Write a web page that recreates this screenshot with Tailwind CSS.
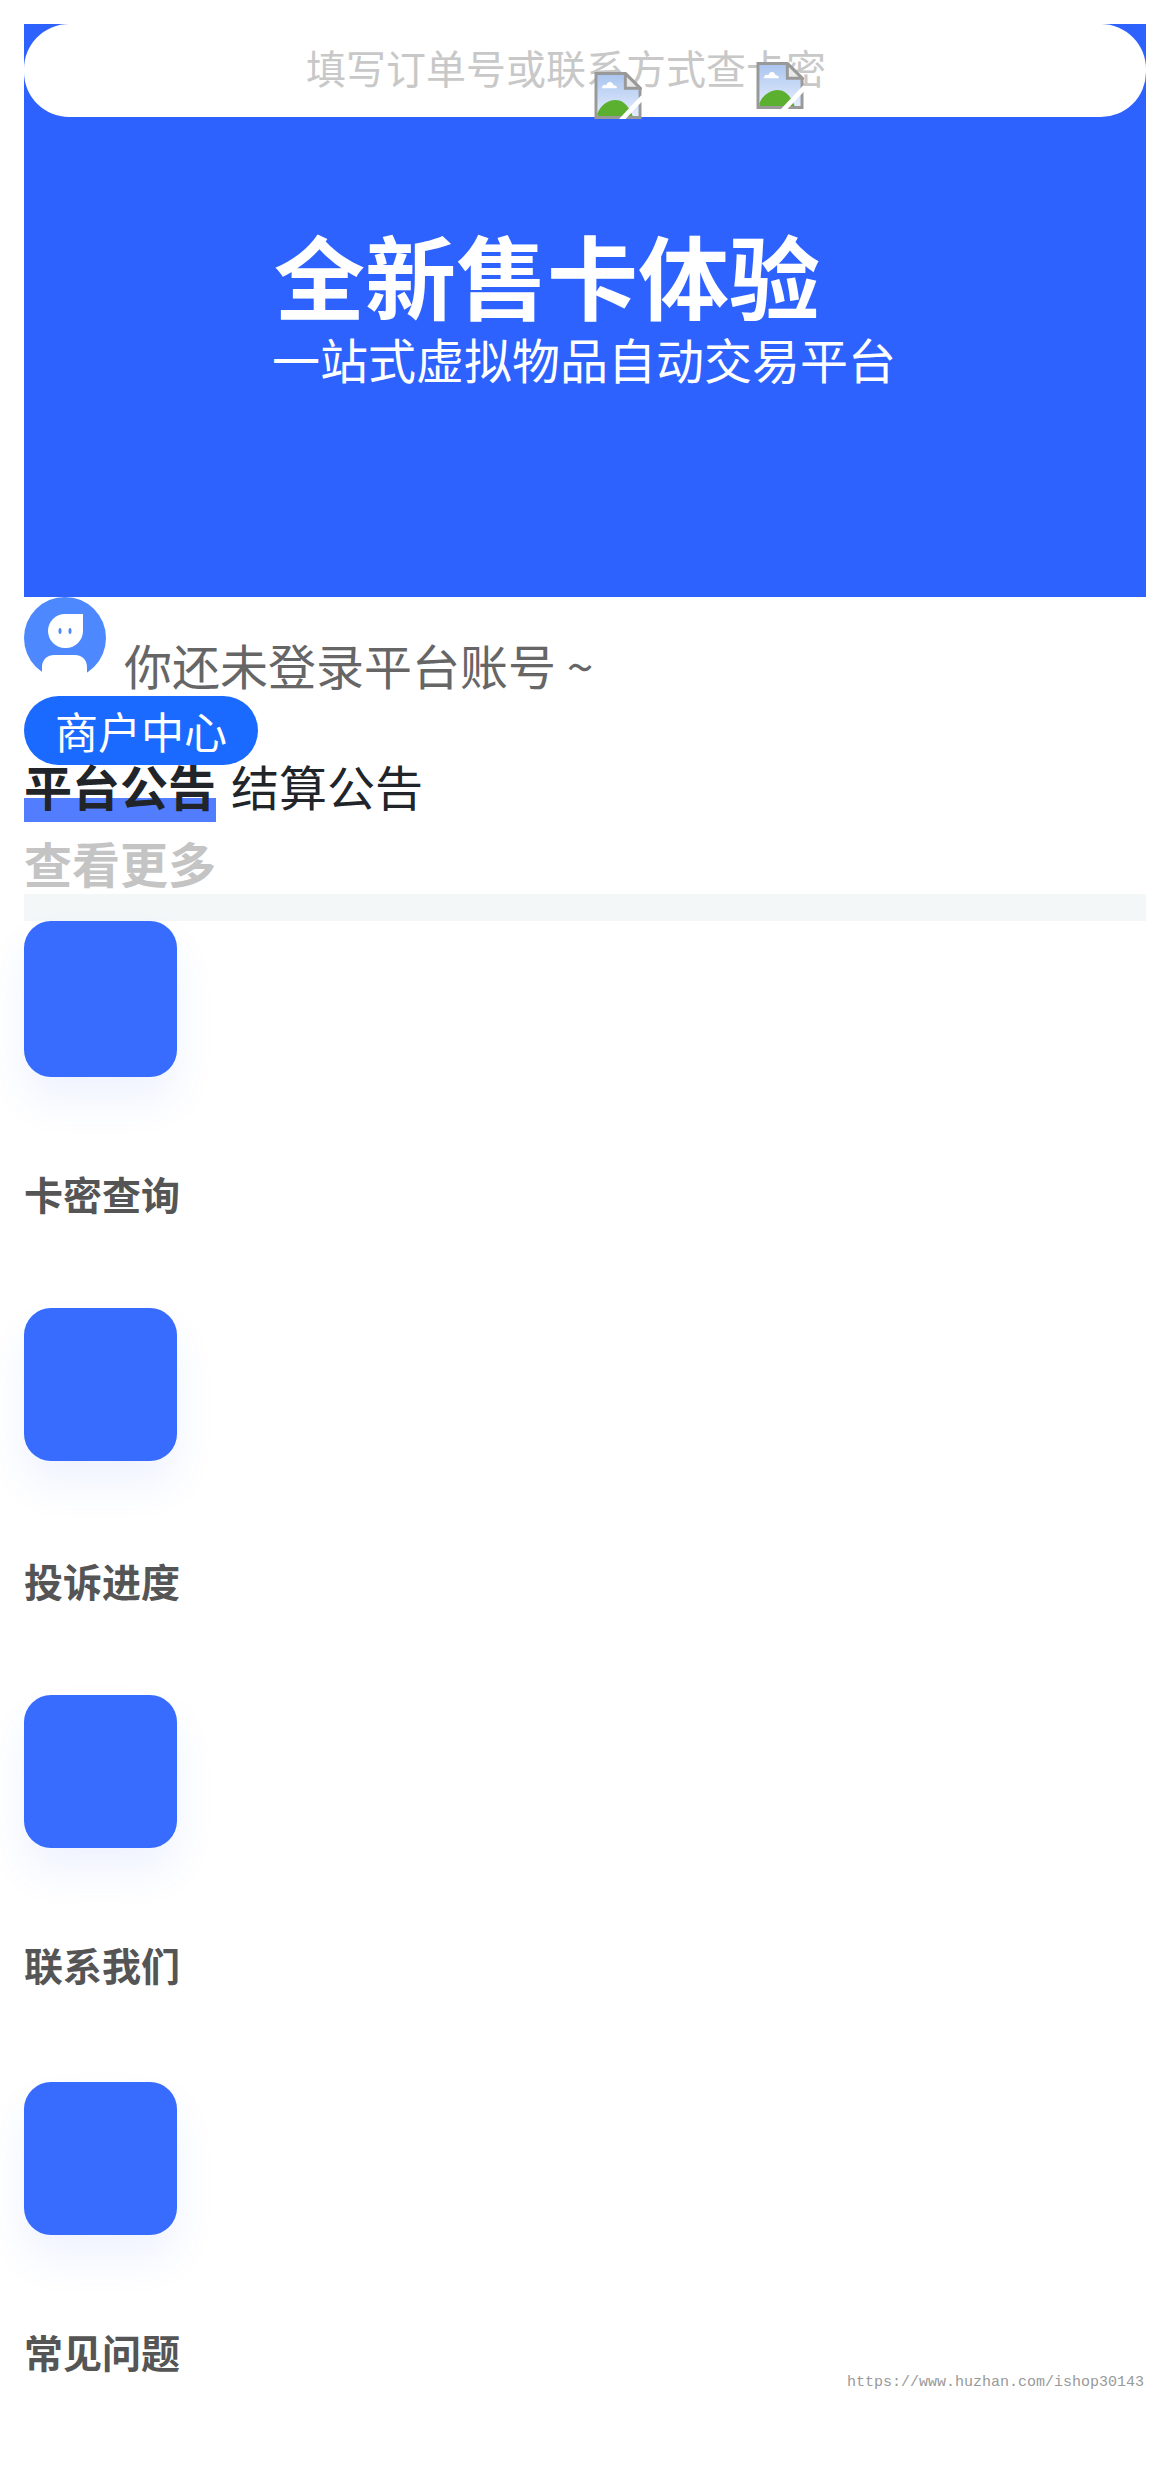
<!DOCTYPE html>
<html lang="zh-CN">

<head>
    <meta charset="UTF-8">
    <title>全新售卡体验</title>
    <script src="https://cdn.jsdelivr.net/npm/@tailwindcss/browser@4"></script>
</head>

<body class="bg-white font-['Noto_Sans_CJK_SC','Noto_Sans',sans-serif]">
    <div class="relative h-[2466px] overflow-hidden px-6 pt-6">

        <!-- banner -->
        <div class="relative h-[573px] bg-[#2d62ff]">
            <div class="relative flex h-[93px] justify-center rounded-[45px] bg-white pr-[38px] pt-[18px] text-[40px] leading-[50px] text-[#c8c8c8]">
                填写订单号或联系方式查卡密
                <svg class="absolute left-[570px] top-[48px] h-[47px] w-[48px]" viewBox="0 0 16 16">
                    <defs>
                        <linearGradient id="sky1" x1="0" y1="0" x2="0" y2="1">
                            <stop offset="0" stop-color="#a9c4ee"/>
                            <stop offset="1" stop-color="#e6eeff"/>
                        </linearGradient>
                    </defs>
                    <path d="M.5.5h10l5 5v10H.5z" fill="url(#sky1)" stroke="#999"/>
                    <path d="M2.500 5.500c0-1 1-1.500 1.500-1 .5-1.500 2-1.500 2.500 0 .5 0 1.500.5 1 1z" fill="#fff"/>
                    <path d="M1 15v-1c1-2.500 3.500-4.500 6-4.500s4.500 1.500 6 5.500z" fill="#5cb030"/>
                    <path d="M9 16.500l7.500-8" fill="none" stroke="#fff" stroke-width="1.600"/>
                    <path d="M10.500.5v5h5z" fill="#e8e8e8" stroke="#999"/>
                </svg>
                <svg class="absolute left-[732px] top-[38px] h-[47px] w-[48px]" viewBox="0 0 16 16">
                    <defs>
                        <linearGradient id="sky2" x1="0" y1="0" x2="0" y2="1">
                            <stop offset="0" stop-color="#a9c4ee"/>
                            <stop offset="1" stop-color="#e6eeff"/>
                        </linearGradient>
                    </defs>
                    <path d="M.5.5h10l5 5v10H.5z" fill="url(#sky2)" stroke="#999"/>
                    <path d="M2.500 5.500c0-1 1-1.500 1.500-1 .5-1.500 2-1.500 2.500 0 .5 0 1.500.5 1 1z" fill="#fff"/>
                    <path d="M1 15v-1c1-2.500 3.500-4.500 6-4.500s4.500 1.500 6 5.500z" fill="#5cb030"/>
                    <path d="M9 16.500l7.500-8" fill="none" stroke="#fff" stroke-width="1.600"/>
                    <path d="M10.500.5v5h5z" fill="#e8e8e8" stroke="#999"/>
                </svg>
            </div>
            <div class="pl-[250px] pt-[106px] text-white">
                <h1 class="text-[91px] font-bold leading-[100px]">全新售卡体验</h1>
                <p class="-ml-[2px] mt-[5px] text-[48px] leading-[60px]">一站式虚拟物品自动交易平台</p>
            </div>
        </div>

        <!-- user -->
        <div class="flex h-[99px] items-start">
            <svg class="h-[82px] w-[82px]" viewBox="0 0 82 82">
                <circle cx="41" cy="41" r="41" fill="#4d88ff"/>
                <path d="M24 34a17 17 0 0 1 17-17h18v17a17 17 0 0 1-17 17h-1a17 17 0 0 1-17-17z" fill="#fff"/>
                <path d="M18 82V70c0-8 6-12 12-12h21c6 0 12 4 12 12v12z" fill="#fff"/>
                <ellipse cx="36" cy="34" rx="1.500" ry="3" fill="#4d88ff"/>
                <ellipse cx="46" cy="34" rx="1.500" ry="3" fill="#4d88ff"/>
            </svg>
            <span class="ml-[18px] mt-[37px] text-[48px] leading-[60px] text-[#666]">你还未登录平台账号 ~</span>
        </div>

        <div class="flex h-[69px] w-[234px] items-center justify-center rounded-[35px] bg-[#1a6aff] text-[43px] text-white">商户中心</div>

        <!-- notices -->
        <div class="flex h-[62px] text-[48px] leading-[40px] text-[#212529]">
            <span class="relative font-bold">
                <span class="absolute bottom-[5px] left-0 h-[24px] w-full bg-[#537dff]"></span>
                <span class="relative">平台公告</span>
            </span>
            <span class="ml-[15px]">结算公告</span>
        </div>
        <div class="h-[67px] pt-[5px] text-[48px] font-bold leading-[60px] text-[#c4c4c4]">查看更多</div>
        <div class="h-[27px] bg-[#f4f7f8]"></div>

        <!-- menu -->
        <div class="flex flex-col">
            <div class="h-[387px]">
                <div class="h-[156px] w-[153px] rounded-[27px] bg-[#386cff] shadow-[0_24px_40px_rgba(56,108,255,0.08)]"></div>
                <p class="mt-[88px] text-[39px] font-bold leading-[56px] text-[#555]">卡密查询</p>
            </div>
            <div class="h-[387px]">
                <div class="h-[153px] w-[153px] rounded-[27px] bg-[#386cff] shadow-[0_24px_40px_rgba(56,108,255,0.08)]"></div>
                <p class="mt-[91px] text-[39px] font-bold leading-[56px] text-[#555]">投诉进度</p>
            </div>
            <div class="h-[387px]">
                <div class="h-[153px] w-[153px] rounded-[27px] bg-[#386cff] shadow-[0_24px_40px_rgba(56,108,255,0.08)]"></div>
                <p class="mt-[88px] text-[39px] font-bold leading-[56px] text-[#555]">联系我们</p>
            </div>
            <div class="h-[300px]">
                <div class="h-[153px] w-[153px] rounded-[27px] bg-[#386cff] shadow-[0_24px_40px_rgba(56,108,255,0.08)]"></div>
                <p class="mt-[88px] text-[39px] font-bold leading-[56px] text-[#555]">常见问题</p>
            </div>
        </div>

        <div class="absolute bottom-[73px] right-[26px] font-['Liberation_Mono',monospace] text-[15px] leading-[20px] text-[#999]">https://www.huzhan.com/ishop30143</div>
    </div>
</body>

</html>
